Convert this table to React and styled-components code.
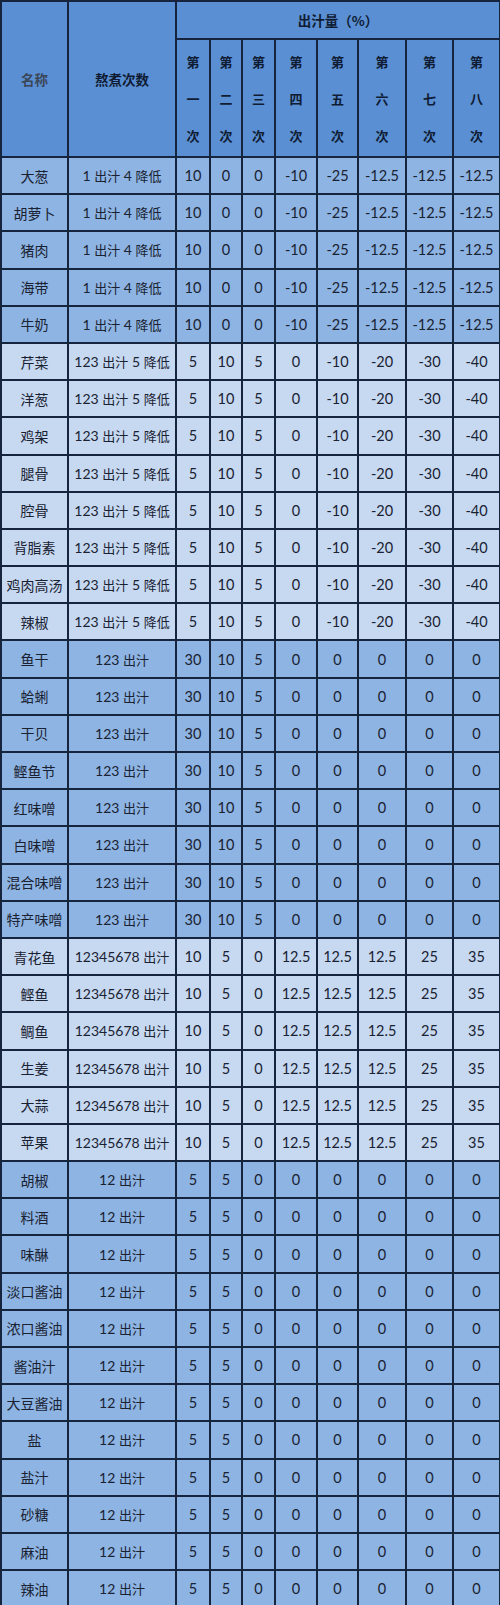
import React from "react";
import styled, { createGlobalStyle } from "styled-components";

const Global = createGlobalStyle`
  html, body { margin: 0; padding: 0; background: #ffffff; }
  body { font-family: "Lato", "Noto Sans CJK SC", sans-serif; }
`;

const Table = styled.table`
  border-collapse: collapse;
  table-layout: fixed;
  width: 499px;
  margin-left: 0;
  font-family: "Lato", "Noto Sans CJK SC", sans-serif;
`;

const HeadCell = styled.th`
  background: #5a8fd4;
  border: 2px solid #16243d;
  color: ${(p) => (p.$muted ? "#3b4656" : "#0f1c33")};
  font-weight: ${(p) => (p.$muted ? 600 : 700)};
  font-size: 13.5px;
  text-align: center;
  vertical-align: middle;
  padding: 0;
  font-family: "Noto Sans CJK SC", sans-serif;
`;

const VerticalLabel = styled.div`
  display: flex;
  flex-direction: column;
  align-items: center;
  gap: 0;
  line-height: 37px;
  font-size: 13px;
  font-weight: 700;
  color: #0f1c33;
`;

const Row = styled.tr`
  height: 37.2px;
  background: ${(p) => (p.$light ? "#c6d9f1" : "#8db4e2")};
`;

const Cell = styled.td`
  border: 2px solid #16243d;
  color: #1a2232;
  font-size: ${(p) => (p.$text ? "14px" : "14.5px")};
  text-align: center;
  vertical-align: middle;
  padding: 0;
  white-space: nowrap;
  overflow: hidden;
  font-family: ${(p) =>
    p.$text ? '"Noto Sans CJK SC", sans-serif' : '"Lato", "Noto Sans CJK SC", sans-serif'};
`;

const Mixed = styled.span`
  font-family: "Lato", "Noto Sans CJK SC", sans-serif;
  font-size: 14px;
`;

const Han = styled.span`
  font-family: "Noto Sans CJK SC", sans-serif;
  font-size: 13px;
`;

const widths = [67, 108, 34, 32, 33, 42, 41, 48, 47, 47];
const ordinals = ["一", "二", "三", "四", "五", "六", "七", "八"];

const groups = [
  {
    light: false,
    process: [["1 "], ["出汁"], [" 4 "], ["降低"]],
    values: ["10", "0", "0", "-10", "-25", "-12.5", "-12.5", "-12.5"],
    names: ["大葱", "胡萝卜", "猪肉", "海带", "牛奶"],
  },
  {
    light: true,
    process: [["123 "], ["出汁"], [" 5 "], ["降低"]],
    values: ["5", "10", "5", "0", "-10", "-20", "-30", "-40"],
    names: ["芹菜", "洋葱", "鸡架", "腿骨", "腔骨", "背脂素", "鸡肉高汤", "辣椒"],
  },
  {
    light: false,
    process: [["123 "], ["出汁"]],
    values: ["30", "10", "5", "0", "0", "0", "0", "0"],
    names: ["鱼干", "蛤蜊", "干贝", "鲣鱼节", "红味噌", "白味噌", "混合味噌", "特产味噌"],
  },
  {
    light: true,
    process: [["12345678 "], ["出汁"]],
    values: ["10", "5", "0", "12.5", "12.5", "12.5", "25", "35"],
    names: ["青花鱼", "鲣鱼", "鲷鱼", "生姜", "大蒜", "苹果"],
  },
  {
    light: false,
    process: [["12 "], ["出汁"]],
    values: ["5", "5", "0", "0", "0", "0", "0", "0"],
    names: [
      "胡椒", "料酒", "味醂", "淡口酱油", "浓口酱油", "酱油汁",
      "大豆酱油", "盐", "盐汁", "砂糖", "麻油", "辣油",
    ],
  },
];

function Process({ parts }) {
  return (
    <>
      {parts.map(([t], i) =>
        i % 2 === 0 ? <Mixed key={i}>{t}</Mixed> : <Han key={i}>{t}</Han>
      )}
    </>
  );
}

export default function App() {
  return (
    <>
      <Global />
      <Table>
        <colgroup>
          {widths.map((w, i) => (
            <col key={i} style={{ width: w }} />
          ))}
        </colgroup>
        <thead>
          <tr style={{ height: 38 }}>
            <HeadCell rowSpan={2} $muted>名称</HeadCell>
            <HeadCell rowSpan={2}>熬煮次数</HeadCell>
            <HeadCell colSpan={8}>出汁量（%）</HeadCell>
          </tr>
          <tr style={{ height: 118 }}>
            {ordinals.map((o) => (
              <HeadCell key={o}>
                <VerticalLabel>
                  <span>第</span>
                  <span>{o}</span>
                  <span>次</span>
                </VerticalLabel>
              </HeadCell>
            ))}
          </tr>
        </thead>
        <tbody>
          {groups.map((g) =>
            g.names.map((n) => (
              <Row key={n} $light={g.light}>
                <Cell $text>{n}</Cell>
                <Cell>
                  <Process parts={g.process} />
                </Cell>
                {g.values.map((v, i) => (
                  <Cell key={i}>{v}</Cell>
                ))}
              </Row>
            ))
          )}
        </tbody>
      </Table>
    </>
  );
}
